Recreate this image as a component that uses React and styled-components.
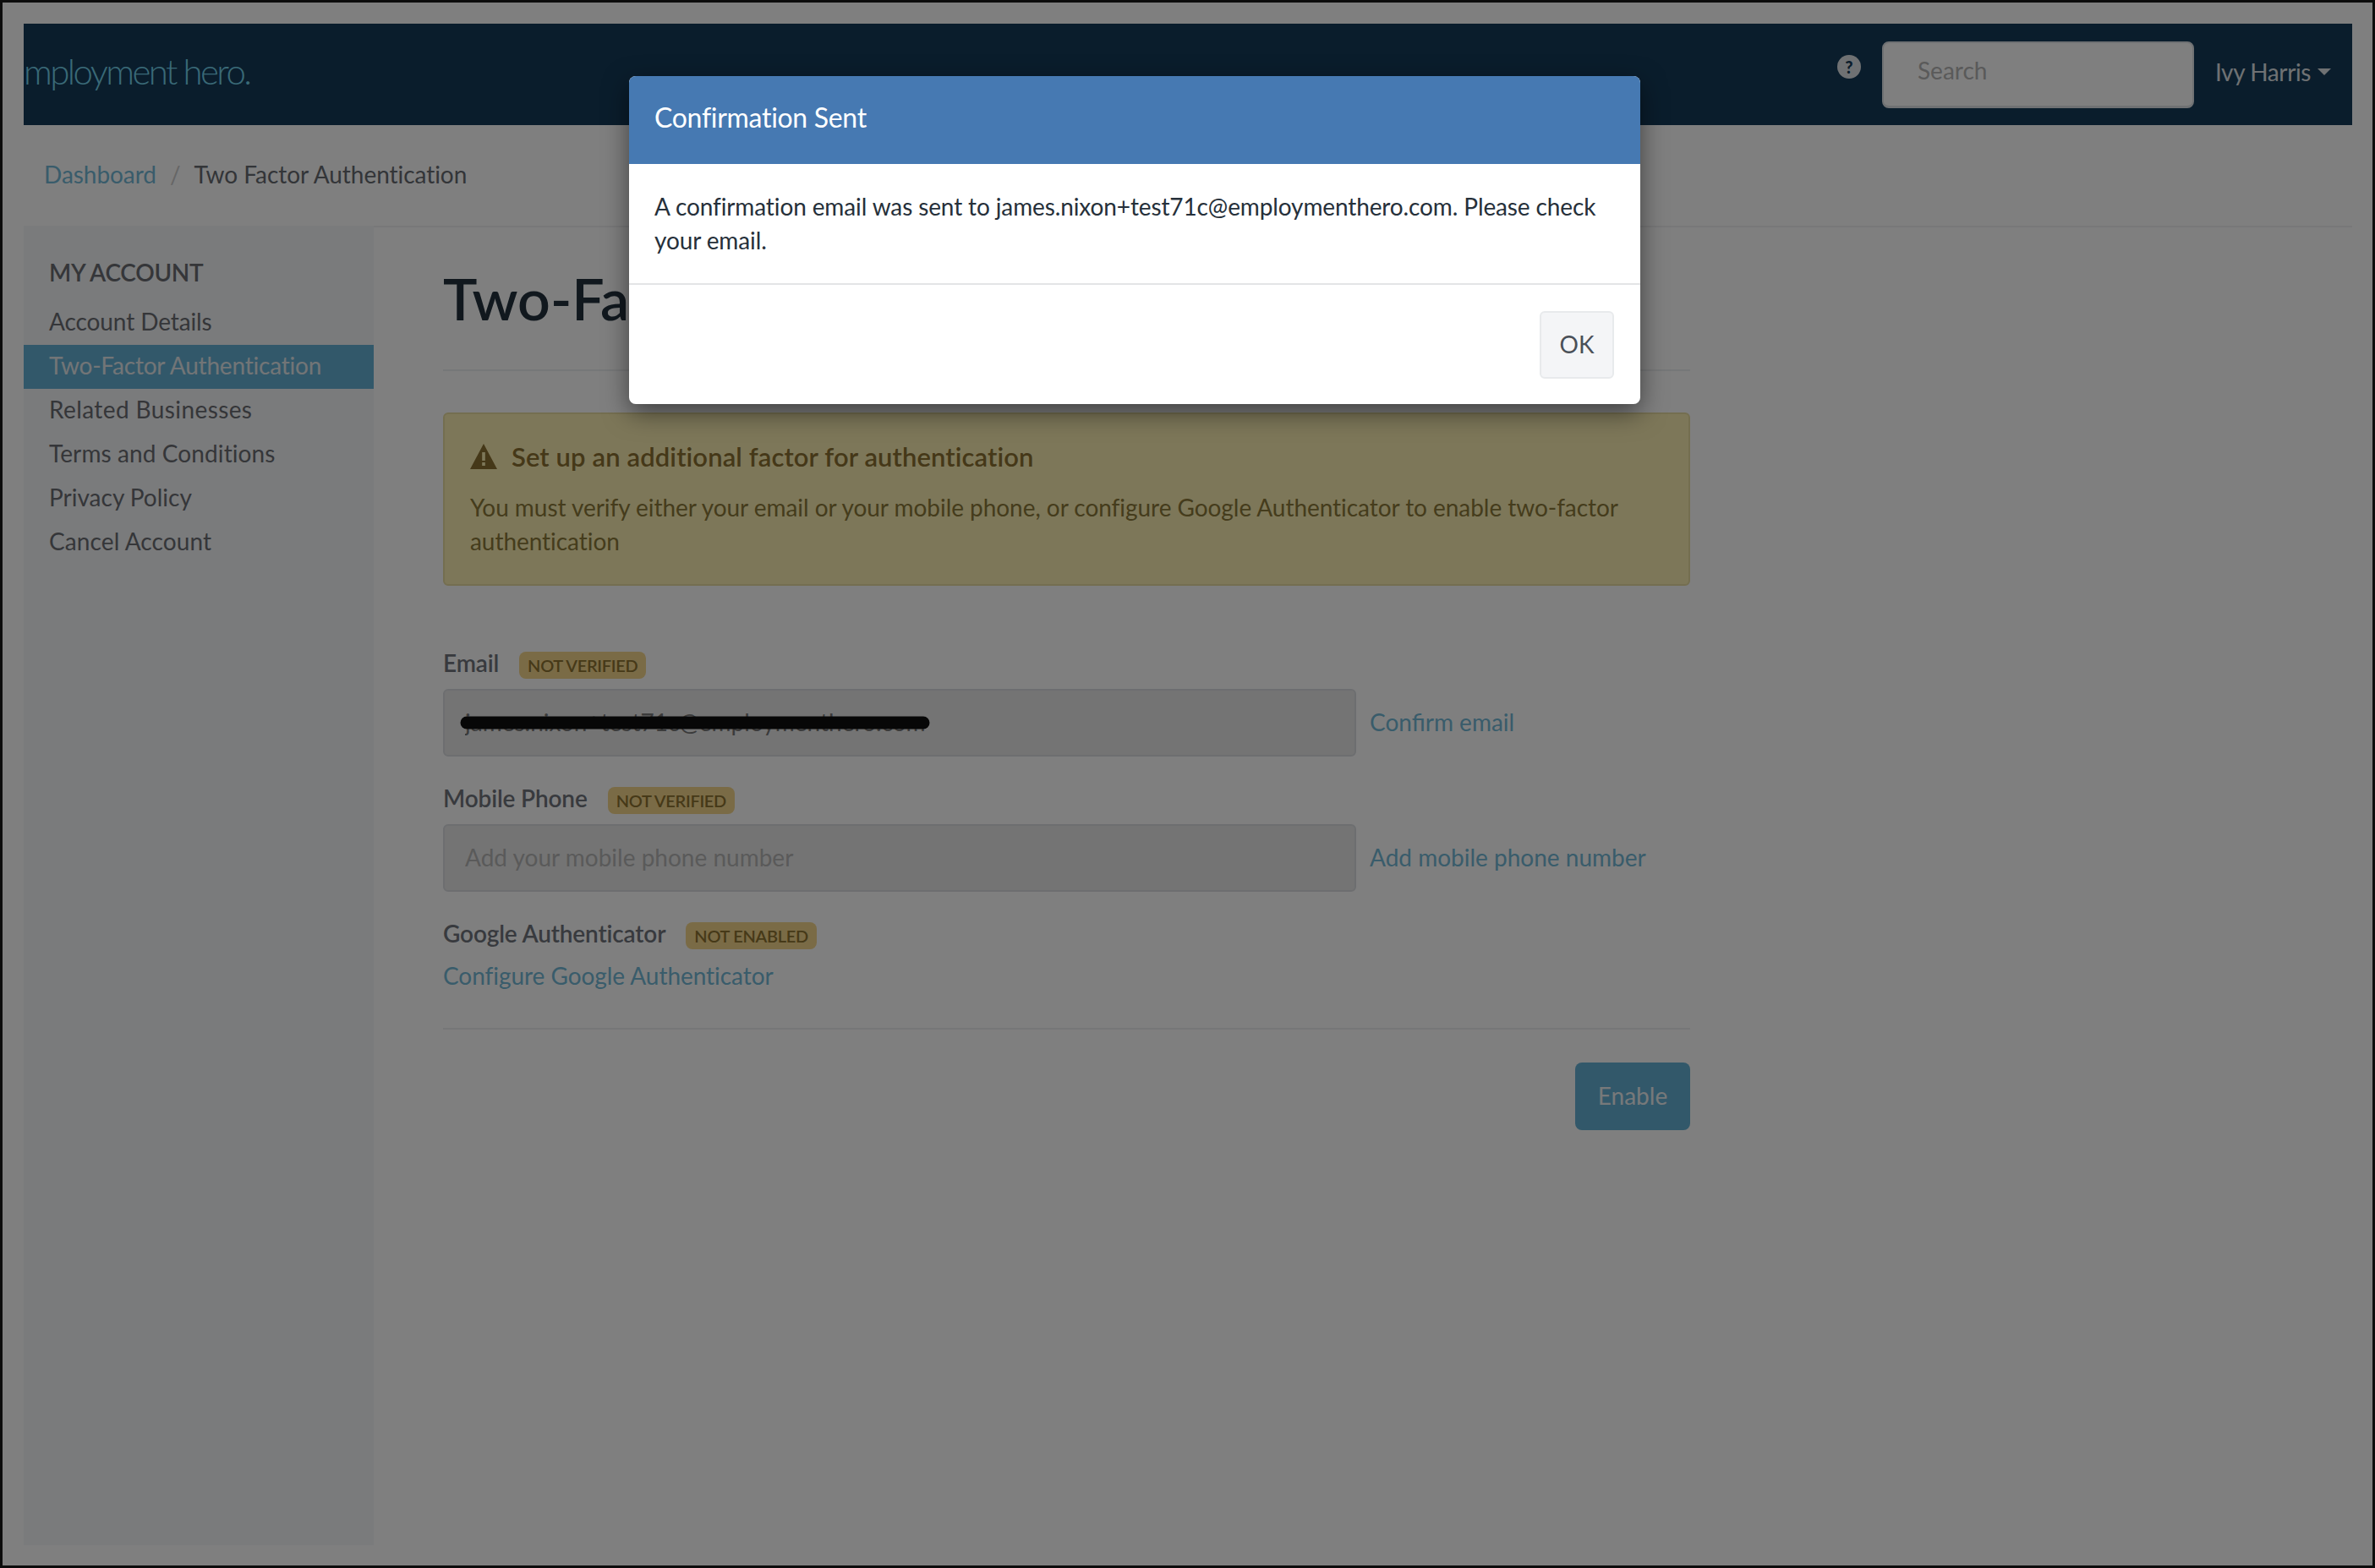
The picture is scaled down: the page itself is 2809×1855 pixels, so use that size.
import React from "react";
import styled, { createGlobalStyle } from "styled-components";

const Global = createGlobalStyle`
  html, body { margin: 0; padding: 0; background: #000; }
  * { box-sizing: border-box; }
  body { font-family: "Lato", "Liberation Sans", sans-serif; color: #333; }
`;

const Frame = styled.div`
  position: relative;
  width: 2809px;
  height: 1855px;
  border: 3px solid #0c0c0c;
  padding: 25px 24px 24px 25px;
  background: #fff;
  overflow: hidden;
`;

const Navbar = styled.header`
  display: flex;
  align-items: center;
  justify-content: space-between;
  height: 120px;
  padding-right: 25px;
  background: #143a58;
`;

const Logo = styled.span`
  margin-top: -8px;
  font-size: 42px;
  font-weight: 300;
  letter-spacing: -2.6px;
  white-space: nowrap;
  color: #74d4ee;
`;

const NavRight = styled.div`
  display: flex;
  align-items: center;
  gap: 25px;
`;

const Help = styled.span`
  display: flex;
  align-items: center;
  justify-content: center;
  width: 28px;
  height: 28px;
  margin-top: -18px;
  border-radius: 50%;
  background: #dfe3e6;
  color: #143a58;
  font-size: 20px;
  font-weight: 900;
`;

const Search = styled.input`
  width: 369px;
  height: 79px;
  padding: 0 40px 10px;
  background: #fff;
  border: 2px solid #dfe3e6;
  border-bottom-width: 3px;
  border-radius: 8px;
  font: 400 28px "Lato", sans-serif;
  &::placeholder { color: #b4b4b4; opacity: 1; }
`;

const UserMenu = styled.span`
  display: flex;
  align-items: center;
  gap: 8px;
  margin-top: -6px;
  color: #dfe3e6;
  font-size: 28px;
  letter-spacing: -0.4px;
`;

const Caret = styled.i`
  width: 0;
  height: 0;
  border-left: 8px solid transparent;
  border-right: 8px solid transparent;
  border-top: 8px solid #dfe3e6;
`;

const Breadcrumb = styled.nav`
  display: flex;
  align-items: center;
  gap: 16px;
  height: 119px;
  padding: 0 0 4px 24px;
  font-size: 28px;
  letter-spacing: -0.05px;
`;

const Crumb = styled.span`
  color: ${(p) => (p.$link ? "#72b8d6" : "#666a70")};
`;

const Sep = styled.span`
  color: #ccc;
`;

const Body = styled.div`
  display: flex;
  height: 1561px;
`;

const Sidebar = styled.aside`
  width: 414px;
  padding-top: 36px;
  background: #f5f6f8;
`;

const SideTitle = styled.div`
  height: 40px;
  line-height: 39px;
  margin-bottom: 13px;
  padding-left: 30px;
  font-size: 28px;
  font-weight: 600;
  letter-spacing: -0.3px;
  color: #6a6d73;
`;

const SideItem = styled.a`
  display: block;
  height: 52px;
  line-height: 48px;
  padding-left: 30px;
  font-size: 28px;
  letter-spacing: ${(p) => p.$spacing}px;
  background: ${(p) => (p.$active ? "#65b1d4" : "transparent")};
  color: ${(p) => (p.$active ? "#e4eaee" : "#6a6d73")};
`;

const Main = styled.main`
  flex: 1;
  padding-left: 82px;
  border-top: 2px solid #f0f1f3;
`;

const Content = styled.div`
  width: 1475px;
`;

const Title = styled.h1`
  margin: 37px 0 0;
  padding-bottom: 37px;
  height: 133px;
  line-height: 94px;
  font-size: 68px;
  font-weight: 600;
  white-space: nowrap;
  color: #22303c;
  border-bottom: 2px solid #eceef0;
`;

const Alert = styled.section`
  margin-top: 49px;
  height: 205px;
  padding: 30px 30px 0;
  background: #fbefb3;
  border: 2px solid #e8dca0;
  border-radius: 6px;
  color: #8a7838;
`;

const AlertHead = styled.div`
  display: flex;
  align-items: center;
  gap: 17px;
  height: 40px;
  margin-bottom: 20px;
  font-size: 31px;
  font-weight: 600;
  letter-spacing: 0.1px;
  color: #8a7030;
`;

const AlertText = styled.p`
  margin: 0;
  font-size: 28px;
  line-height: 40px;
  letter-spacing: -0.05px;
`;

const LabelRow = styled.div`
  display: flex;
  align-items: center;
  gap: 24px;
  height: 32px;
  margin-top: ${(p) => p.$top || 36}px;
  margin-bottom: 12px;
`;

const Label = styled.label`
  margin-top: -6px;
  font-size: 28px;
  font-weight: 600;
  letter-spacing: -0.15px;
  color: #70747c;
`;

const Badge = styled.span`
  display: flex;
  align-items: center;
  height: 32px;
  padding: 0 10px;
  border-radius: 8px;
  background: #f5d68c;
  color: #8c7230;
  font-size: 20px;
  font-weight: 600;
  letter-spacing: -0.3px;
`;

const InputRow = styled.div`
  display: flex;
  align-items: center;
  gap: 16px;
`;

const InputWrap = styled.div`
  position: relative;
  width: 1080px;
  height: 80px;
`;

const Field = styled.input`
  display: block;
  width: 100%;
  height: 100%;
  padding: 0 24px 3px;
  background: #e9e9e9;
  border: 2px solid #dadde0;
  border-radius: 6px;
  font: 400 28px "Lato", sans-serif;
  color: #777;
  &::placeholder { color: #b4b4b4; opacity: 1; }
`;

const Scribble = styled.svg`
  position: absolute;
  left: 20px;
  top: 30px;
`;

const LinkText = styled.a`
  margin-top: -3px;
  font-size: 28px;
  color: #72b8d6;
  white-space: nowrap;
`;

const ConfigureLink = styled.div`
  height: 40px;
  line-height: 38px;
  margin-top: 12px;
  font-size: 28px;
  letter-spacing: -0.05px;
  color: #72b8d6;
`;

const Rule = styled.hr`
  margin: 41px 0 39px;
  border: 0;
  border-top: 2px solid #eceef0;
`;

const Actions = styled.div`
  display: flex;
  justify-content: flex-end;
`;

const EnableButton = styled.button`
  width: 136px;
  height: 80px;
  padding: 0 0 3px;
  border: 0;
  border-radius: 8px;
  background: #65b1d4;
  color: #eef2f4;
  font: 400 28px "Lato", sans-serif;
`;

const Overlay = styled.div`
  position: absolute;
  inset: 0;
  background: rgba(0, 0, 0, 0.5);
`;

const Modal = styled.div`
  position: absolute;
  left: 741px;
  top: 87px;
  width: 1196px;
  height: 388px;
  display: flex;
  flex-direction: column;
  background: #fff;
  border-radius: 8px;
  overflow: hidden;
`;

const ModalShadow = styled.div`
  position: absolute;
  left: 741px;
  top: 87px;
  width: 1196px;
  height: 388px;
  border-radius: 8px;
  box-shadow: 0 10px 30px rgba(0, 0, 0, 0.5);
`;

const ModalHead = styled.div`
  display: flex;
  align-items: center;
  height: 104px;
  padding: 0 0 7px 30px;
  background: #4679b2;
  color: #fff;
  font-size: 32px;
  letter-spacing: -0.3px;
`;

const ModalBody = styled.p`
  margin: 0;
  height: 143px;
  padding: 30px 30px 0;
  border-bottom: 2px solid #e3e4e6;
  color: #26303a;
  font-size: 28px;
  line-height: 40px;
  letter-spacing: -0.12px;
`;

const ModalFoot = styled.div`
  display: flex;
  justify-content: flex-end;
  padding: 31px 31px 0 0;
`;

const OkButton = styled.button`
  width: 88px;
  height: 80px;
  padding: 0 0 3px;
  background: #f4f5f7;
  border: 2px solid #e8eaec;
  border-radius: 6px;
  color: #4a5058;
  font: 400 28px "Lato", sans-serif;
`;

const sideItems = [
  ["Account Details", false, -0.1],
  ["Two-Factor Authentication", true, -0.2],
  ["Related Businesses", false, 0.4],
  ["Terms and Conditions", false, 0.1],
  ["Privacy Policy", false, 0],
  ["Cancel Account", false, 0.1],
];

export default function App() {
  return (
    <>
      <Global />
      <Frame>
        <Navbar>
          <Logo>mployment hero.</Logo>
          <NavRight>
            <Help>?</Help>
            <Search placeholder="Search" />
            <UserMenu>
              Ivy Harris <Caret />
            </UserMenu>
          </NavRight>
        </Navbar>
        <Breadcrumb>
          <Crumb $link>Dashboard</Crumb>
          <Sep>/</Sep>
          <Crumb>Two Factor Authentication</Crumb>
        </Breadcrumb>
        <Body>
          <Sidebar>
            <SideTitle>MY ACCOUNT</SideTitle>
            {sideItems.map(([label, active, spacing]) => (
              <SideItem key={label} $active={active} $spacing={spacing}>
                {label}
              </SideItem>
            ))}
          </Sidebar>
          <Main>
            <Content>
              <Title>Two-Factor Authentication</Title>
              <Alert>
                <AlertHead>
                  <svg width="32" height="30" viewBox="0 0 32 30">
                    <path d="M16 0 L32 30 H0 Z" fill="#8a7030" />
                    <rect x="14.2" y="10" width="3.6" height="10" fill="#fbefb3" />
                    <rect x="14.2" y="22" width="3.6" height="4" fill="#fbefb3" />
                  </svg>
                  Set up an additional factor for authentication
                </AlertHead>
                <AlertText>
                  You must verify either your email or your mobile phone, or configure Google
                  Authenticator to enable two-factor authentication
                </AlertText>
              </Alert>
              <LabelRow $top={78}>
                <Label>Email</Label>
                <Badge>NOT VERIFIED</Badge>
              </LabelRow>
              <InputRow>
                <InputWrap>
                  <Field disabled value="james.nixon+test71c@employmenthero.com" readOnly />
                  <Scribble width="556" height="20" viewBox="0 0 556 20">
                    <path d="M8 10 L548 10" stroke="#0e0e0e" strokeWidth="15" strokeLinecap="round" />
                  </Scribble>
                </InputWrap>
                <LinkText>Confirm email</LinkText>
              </InputRow>
              <LabelRow>
                <Label>Mobile Phone</Label>
                <Badge>NOT VERIFIED</Badge>
              </LabelRow>
              <InputRow>
                <InputWrap>
                  <Field disabled placeholder="Add your mobile phone number" />
                </InputWrap>
                <LinkText>Add mobile phone number</LinkText>
              </InputRow>
              <LabelRow>
                <Label>Google Authenticator</Label>
                <Badge>NOT ENABLED</Badge>
              </LabelRow>
              <ConfigureLink>Configure Google Authenticator</ConfigureLink>
              <Rule />
              <Actions>
                <EnableButton>Enable</EnableButton>
              </Actions>
            </Content>
          </Main>
        </Body>
        <Overlay />
        <ModalShadow />
        <Modal>
          <ModalHead>Confirmation Sent</ModalHead>
          <ModalBody>
            A confirmation email was sent to james.nixon+test71c@employmenthero.com. Please check
            your email.
          </ModalBody>
          <ModalFoot>
            <OkButton>OK</OkButton>
          </ModalFoot>
        </Modal>
      </Frame>
    </>
  );
}
